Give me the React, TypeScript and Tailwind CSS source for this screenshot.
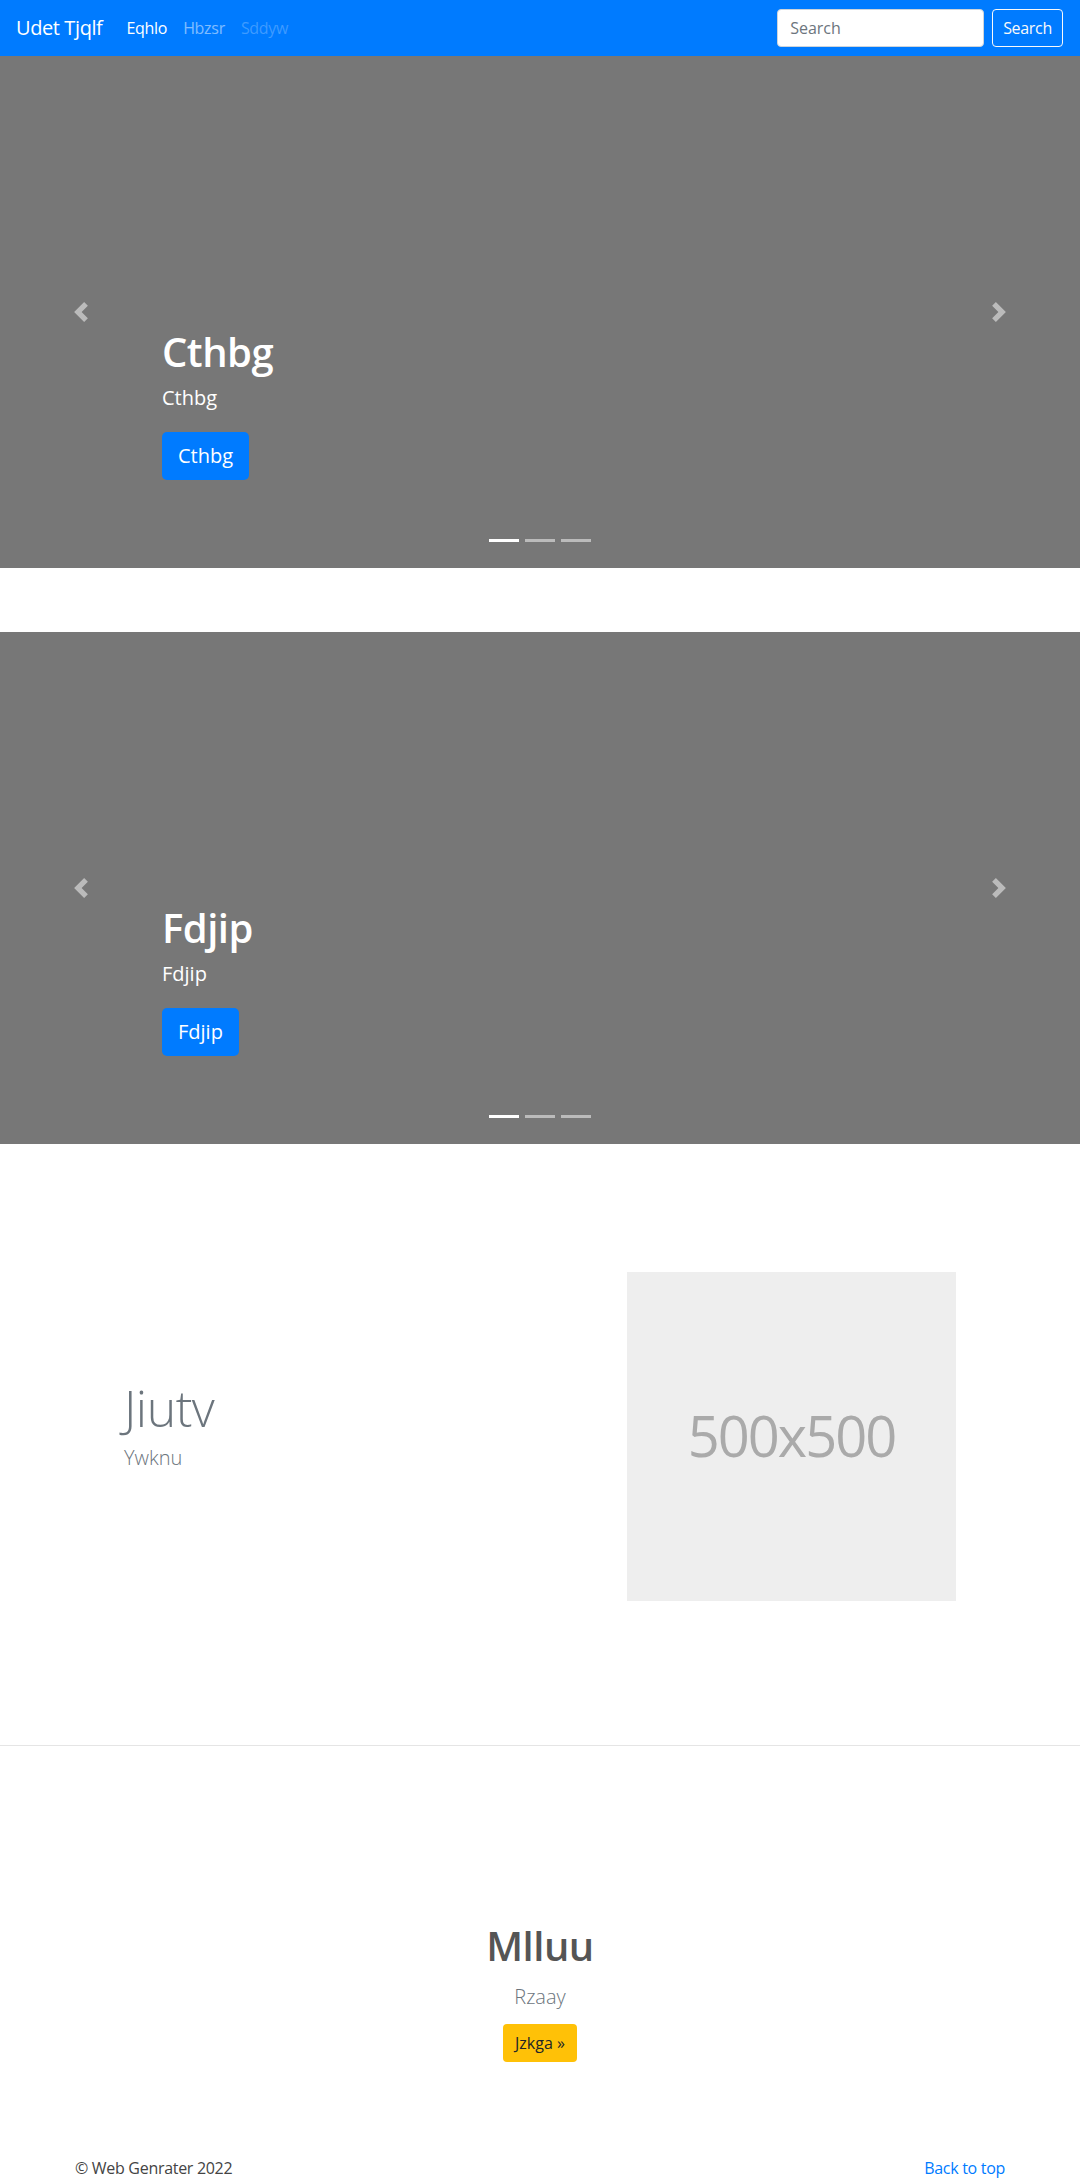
import React from "react";

const font = { fontFamily: '"Open Sans", "Noto Sans", Arial, sans-serif' };

function Chevron({ dir }: { dir: "prev" | "next" }) {
  return (
    <svg width="20" height="20" viewBox="0 0 8 8" className="opacity-50">
      <path
        fill="#fff"
        d={
          dir === "prev"
            ? "M5.25 0l-4 4 4 4 1.5-1.5-2.5-2.5 2.5-2.5-1.5-1.5z"
            : "M2.75 0l-1.5 1.5 2.5 2.5-2.5 2.5 1.5 1.5 4-4-4-4z"
        }
      />
    </svg>
  );
}

function Carousel({ title }: { title: string }) {
  return (
    <div className="relative h-[512px] w-full bg-[#777777] overflow-hidden">
      <div className="absolute left-0 top-0 bottom-0 w-[15%] flex items-center justify-center">
        <Chevron dir="prev" />
      </div>
      <div className="absolute right-0 top-0 bottom-0 w-[15%] flex items-center justify-center">
        <Chevron dir="next" />
      </div>
      <div className="absolute left-[15%] right-[15%] bottom-[48px] py-5 text-left text-white">
        <h1 className="text-[40px] leading-[48px] font-semibold tracking-[-0.5px] mb-2">{title}</h1>
        <p className="text-[20px] leading-[28px] mb-5">{title}</p>
        <p className="mb-5">
          <span className="inline-flex items-center h-12 px-4 rounded-[5px] bg-[#007bff] text-white text-[20px]">
            {title}
          </span>
        </p>
      </div>
      <div className="absolute left-0 right-0 top-[483px] flex justify-center gap-[6px]">
        <span className="block w-[30px] h-[3px] bg-white" />
        <span className="block w-[30px] h-[3px] bg-white opacity-50" />
        <span className="block w-[30px] h-[3px] bg-white opacity-50" />
      </div>
    </div>
  );
}

export default function App() {
  return (
    <div className="w-[1080px] bg-white text-[#212529] overflow-hidden" style={font}>
      <nav className="h-14 bg-[#007bff] flex items-center pl-4 pr-[17px]">
        <span className="text-white text-[20px] leading-[30px] tracking-[-0.4px] mr-4">Udet Tjqlf</span>
        <div className="flex items-center text-[16px] tracking-[-0.3px]">
          <span className="px-2 text-white">Eqhlo</span>
          <span className="px-2 text-white/50">Hbzsr</span>
          <span className="px-2 text-white/25">Sddyw</span>
        </div>
        <div className="ml-auto flex items-center gap-2">
          <div className="w-[207px] h-[38px] rounded bg-white border border-[#ced4da] flex items-center px-3 text-[16px] text-[#6c757d]">
            Search
          </div>
          <div className="h-[38px] px-[10px] rounded border border-[#f8f9fa] text-[#f8f9fa] flex items-center text-[16px] tracking-[-0.3px]">
            Search
          </div>
        </div>
      </nav>

      <Carousel title="Cthbg" />
      <div className="mt-16">
        <Carousel title="Fdjip" />
      </div>

      <div className="mt-16 h-[457px] flex px-[124px]">
        <div className="flex-1 pt-[175px] text-[#6c757d]">
          <h2 className="text-[50px] leading-[50px] font-light tracking-[-0.5px] mb-[10px]">Jiutv</h2>
          <p className="text-[20px] leading-[30px] font-light">Ywknu</p>
        </div>
        <div className="self-center w-[329px] h-[329px] bg-[#eeeeee] flex items-center justify-center pb-1">
          <span className="text-[56px] text-[#aaaaaa] tracking-[-2px]">500x500</span>
        </div>
      </div>

      <hr className="mt-20 border-0 border-t border-black/10" />

      <div className="pt-[176px] flex flex-col items-center text-center">
        <h1 className="text-[40px] leading-[48px] font-semibold tracking-[-0.5px] text-[#555555]">Mlluu</h1>
        <p className="mt-3 text-[20px] leading-[30px] font-light text-[#6c757d]">Rzaay</p>
        <span className="mt-3 inline-flex items-center h-[38px] px-3 rounded bg-[#ffc107] text-[#212529] text-[16px]">
          Jzkga »
        </span>
      </div>

      <footer className="mt-[94px] mx-[75px] flex justify-between text-[16px] leading-6 tracking-[-0.3px]">
        <p className="text-[#444444]">© Web Genrater 2022</p>
        <p className="text-[#007bff]">Back to top</p>
      </footer>
      <div className="h-10" />
    </div>
  );
}
